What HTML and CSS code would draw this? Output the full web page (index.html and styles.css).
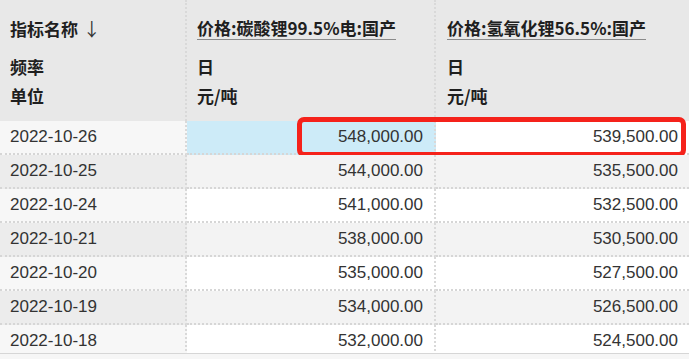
FILE: index.html
```html
<!DOCTYPE html>
<html lang="zh-CN">
<head>
<meta charset="utf-8">
<title>指标</title>
<link rel="stylesheet" href="styles.css">
</head>
<body>
<div class="table">
  <div class="row head">
    <div class="cell c1">
      <div class="title"><span class="t">指标名称</span> <span class="arrow">↓</span></div>
      <div class="meta">频率</div>
      <div class="meta">单位</div>
    </div>
    <div class="cell c2">
      <div class="title"><span class="t u">价格:碳酸锂99.5%电:国产</span></div>
      <div class="meta">日</div>
      <div class="meta">元/吨</div>
    </div>
    <div class="cell c3">
      <div class="title"><span class="t u">价格:氢氧化锂56.5%:国产</span></div>
      <div class="meta">日</div>
      <div class="meta">元/吨</div>
    </div>
  </div>
  <div class="row odd first">
    <div class="cell c1">2022-10-26</div>
    <div class="cell c2 num sel">548,000.00</div>
    <div class="cell c3 num">539,500.00</div>
    <div class="mark"></div>
  </div>
  <div class="row even">
    <div class="cell c1">2022-10-25</div>
    <div class="cell c2 num">544,000.00</div>
    <div class="cell c3 num">535,500.00</div>
  </div>
  <div class="row odd">
    <div class="cell c1">2022-10-24</div>
    <div class="cell c2 num">541,000.00</div>
    <div class="cell c3 num">532,500.00</div>
  </div>
  <div class="row even">
    <div class="cell c1">2022-10-21</div>
    <div class="cell c2 num">538,000.00</div>
    <div class="cell c3 num">530,500.00</div>
  </div>
  <div class="row odd">
    <div class="cell c1">2022-10-20</div>
    <div class="cell c2 num">535,000.00</div>
    <div class="cell c3 num">527,500.00</div>
  </div>
  <div class="row even">
    <div class="cell c1">2022-10-19</div>
    <div class="cell c2 num">534,000.00</div>
    <div class="cell c3 num">526,500.00</div>
  </div>
  <div class="row odd">
    <div class="cell c1">2022-10-18</div>
    <div class="cell c2 num">532,000.00</div>
    <div class="cell c3 num">524,500.00</div>
  </div>
</div>
</body>
</html>
```

FILE: styles.css
```css
html, body {
  margin: 0;
  padding: 0;
}
body {
  background: #f6f6f6;
  font-family: "Liberation Sans", "Noto Sans CJK SC", sans-serif;
  color: #333;
}
.table {
  height: 353px;
  overflow: hidden;
  border-bottom: 1px solid #d6d6d6;
  background: #fff;
}
.row {
  display: grid;
  grid-template-columns: 187px 249px 253px;
  height: 34px;
  position: relative;
}
.cell {
  box-sizing: border-box;
  border-right: 2px dotted #d9d9d9;
  border-bottom: 2px dotted #d6d6d6;
  padding: 0 11px 0 10px;
  font-size: 17px;
  line-height: 32px;
  white-space: nowrap;
}
.cell.c3 {
  border-right: none;
}
.head {
  height: 121px;
  background: #e8e8e8;
}
.head .cell {
  border-bottom: none;
  padding-top: 17px;
  color: #1f1f1f;
  font-family: "Noto Sans CJK SC", "Liberation Sans", sans-serif;
  font-weight: bold;
}
.head .c3 {
  padding-left: 11px;
}
.title {
  height: 23px;
  line-height: 22px;
  margin-bottom: 12px;
}
.t {
  display: inline-block;
}
.t.u {
  border-bottom: 1px solid #8a8a8a;
}
.arrow {
  font-weight: normal;
  font-family: "Noto Sans CJK SC", "DejaVu Sans", sans-serif;
  font-size: 18px;
  color: #333;
  margin-left: 1px;
}
.meta {
  line-height: 29px;
  height: 29px;
}
.num {
  text-align: right;
}
.odd .c1 {
  background: #f7f7f7;
}
.even .c1 {
  background: #ececec;
}
.odd .c2, .odd .c3 {
  background: #ffffff;
}
.even .c2, .even .c3 {
  background: #f3f3f3;
}
.row .sel {
  background: #cdebf8;
}
.mark {
  position: absolute;
  left: 297px;
  top: -4px;
  width: 389px;
  height: 40px;
  box-sizing: border-box;
  border: 5px solid #f5221b;
  border-radius: 7px;
  pointer-events: none;
}
```
